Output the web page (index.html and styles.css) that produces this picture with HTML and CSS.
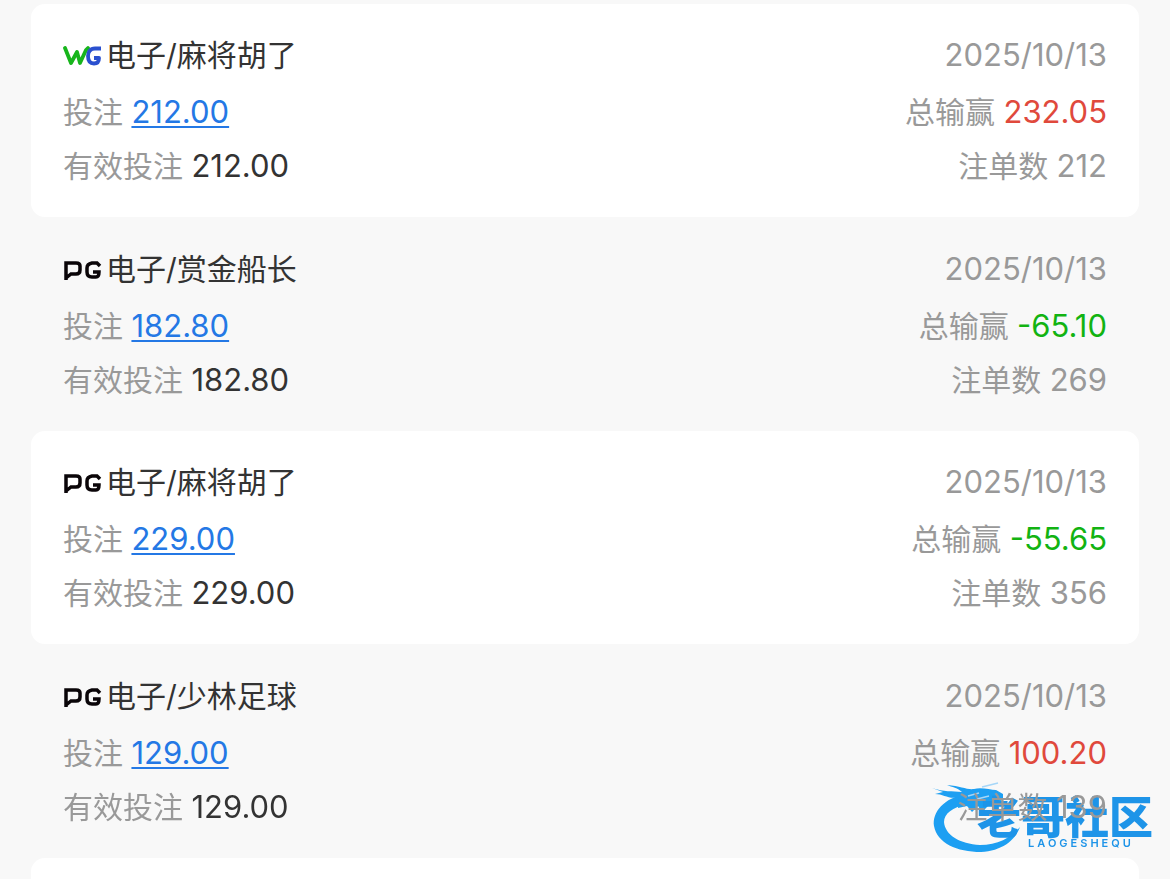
FILE: index.html
```html
<!DOCTYPE html>
<html lang="zh-CN">
<head>
    <meta charset="UTF-8">
    <meta name="viewport" content="width=device-width, initial-scale=1">
    <title>投注</title>
    <link rel="stylesheet" href="styles.css">
</head>
<body>
    <svg class="symbols" aria-hidden="true">
        <symbol id="wg" viewBox="0 0 39 22">
            <path d="M2 4 L8 19 L14 8 L17 19 L23 6 L25 4" fill="none" stroke="#17b51c" stroke-width="3.800" stroke-linejoin="round" stroke-linecap="round"/>
            <path d="M38 4.500 H32 C27 4.500 25 8 25 12 C25 17 27 19.500 31 19.500 C34 19.500 36 18 36 14 H31" fill="none" stroke="#2a50cf" stroke-width="3.800" stroke-linejoin="round"/>
        </symbol>
        <symbol id="pg" viewBox="0 0 39 22">
            <path d="M3 22 V5 H13 Q17 5 17 8 V12 Q17 16 13 16 H8 L3 20" fill="none" stroke="#0a0508" stroke-width="3.500"/>
            <path d="M37 8 L34 5 H29 Q24 6 24 10 V14 Q24 19 29 19 H33 Q36 19 36 14 H30" fill="none" stroke="#0a0508" stroke-width="3.500"/>
        </symbol>
    </svg>

    <main class="list">
        <section class="card">
            <div class="row">
                <span class="game"><svg class="logo"><use href="#wg"/></svg>电子/麻将胡了</span>
                <time>2025/10/13</time>
            </div>
            <div class="row">
                <span>投注 <a href="#">212.00</a></span>
                <span>总输赢 <b class="win">232.05</b></span>
            </div>
            <div class="row">
                <span>有效投注 <b>212.00</b></span>
                <span>注单数 <b class="count">212</b></span>
            </div>
        </section>
        <section class="card">
            <div class="row">
                <span class="game"><svg class="logo"><use href="#pg"/></svg>电子/赏金船长</span>
                <time>2025/10/13</time>
            </div>
            <div class="row">
                <span>投注 <a href="#">182.80</a></span>
                <span>总输赢 <b class="lose">-65.10</b></span>
            </div>
            <div class="row">
                <span>有效投注 <b>182.80</b></span>
                <span>注单数 <b class="count">269</b></span>
            </div>
        </section>
        <section class="card">
            <div class="row">
                <span class="game"><svg class="logo"><use href="#pg"/></svg>电子/麻将胡了</span>
                <time>2025/10/13</time>
            </div>
            <div class="row">
                <span>投注 <a href="#">229.00</a></span>
                <span>总输赢 <b class="lose">-55.65</b></span>
            </div>
            <div class="row">
                <span>有效投注 <b>229.00</b></span>
                <span>注单数 <b class="count">356</b></span>
            </div>
        </section>
        <section class="card">
            <div class="row">
                <span class="game"><svg class="logo"><use href="#pg"/></svg>电子/少林足球</span>
                <time>2025/10/13</time>
            </div>
            <div class="row">
                <span>投注 <a href="#">129.00</a></span>
                <span>总输赢 <b class="win">100.20</b></span>
            </div>
            <div class="row">
                <span>有效投注 <b>129.00</b></span>
                <span>注单数 <b class="count">139</b></span>
            </div>
        </section>
        <section class="card"></section>
    </main>

    <div class="watermark">
        <svg class="dragon" viewBox="0 0 92 72" aria-hidden="true">
            <path d="M34 12 C12 16 0 30 2 44 C5 61 25 70 49 70 C69 69 83 59 88 45 C79 56 65 63 48 63 C28 62 13 53 12 40 C12 32 20 25 36 22 Z" fill="#1d9ff2"/>
            <path d="M0 6 C12 10 20 9 30 10 C26 6 20 5 15 3 C29 4 35 8 42 7 C50 5 58 8 64 8 L71 12 L71 18 L66 20 L68 24 L56 24 L50 30 L46 24 L40 30 L35 24 L26 26 L27 15 C17 18 12 12 3 12 L11 10 Z" fill="#1d9ff2"/>
            <path d="M36 14 L47 11 M45 17 L57 14 M50 5 L66 1" stroke="#a5d6f8" stroke-width="1.500"/>
        </svg>
        <div class="brand">
            <strong>老哥社区</strong>
            <small>LAOGESHEQU</small>
        </div>
    </div>
</body>
</html>
```

FILE: styles.css
```css
* {
    box-sizing: border-box;
}
body {
    margin: 0;
    background-color: #f8f8f8;
    color: #999;
    font-family: Inter, "Noto Sans CJK SC", sans-serif;
    font-size: 30px;
    line-height: 42px;
}
.symbols {
    position: absolute;
    width: 0;
    height: 0;
}
.list {
    height: 100vh;
    padding: 4px 31px 0;
    overflow: hidden;
}
.card {
    padding: 30px 32px;
    border-radius: 14px;
}
.card:nth-child(odd) {
    background-color: #fff;
}
.card:nth-child(even) {
    padding-top: 31px;
}
.row {
    display: flex;
    justify-content: space-between;
    height: 42px;
    margin-bottom: 12px;
    position: relative;
    z-index: 1;
}
.row:first-child {
    margin-bottom: 15px;
}
.row:last-child {
    margin-bottom: 0;
}
.game {
    display: flex;
    align-items: center;
    gap: 4px;
    color: #333;
}
.logo {
    width: 39px;
    height: 22px;
}
a, b, time {
    font-size: 31px;
    font-weight: 400;
}
a {
    color: #2478e5;
    text-decoration-thickness: 2px;
    text-underline-offset: 3px;
}
b {
    color: #333;
}
.win {
    color: #e0493c;
}
.lose {
    color: #12b312;
}
.count {
    color: #999;
}
.watermark {
    position: fixed;
    right: 17px;
    bottom: 25px;
    display: flex;
    align-items: flex-end;
    color: #1e94e8;
}
.dragon {
    width: 92px;
    height: 72px;
    margin-right: -47px;
}
.brand {
    display: flex;
    flex-direction: column;
    align-items: center;
    padding-bottom: 5px;
}
.brand strong {
    font-size: 44px;
    font-weight: 900;
    line-height: 38px;
}
.brand small {
    padding-left: 32px;
    font-size: 11px;
    font-weight: 600;
    letter-spacing: 3px;
    line-height: 12px;
}
```
